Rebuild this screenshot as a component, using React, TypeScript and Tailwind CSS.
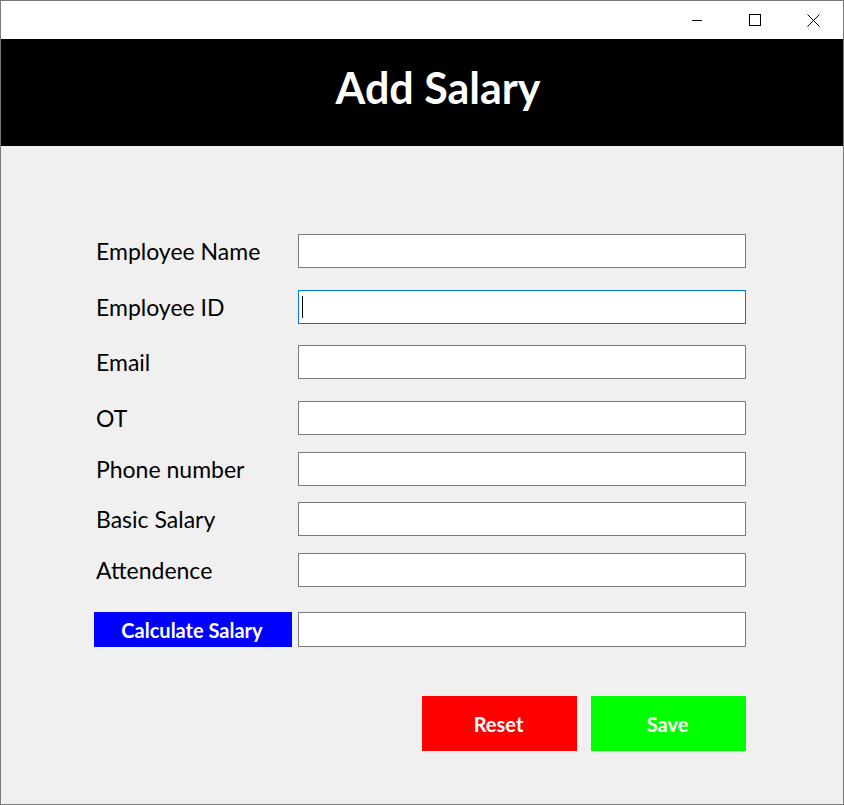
import React from "react"

const rows = [
  { label: "Employee Name", mt: "mt-[88px]" },
  { label: "Employee ID", mt: "mt-[22px]", focused: true },
  { label: "Email", mt: "mt-[21px]" },
  { label: "OT", mt: "mt-[22px]" },
  { label: "Phone number", mt: "mt-[17px]" },
  { label: "Basic Salary", mt: "mt-[16px]" },
  { label: "Attendence", mt: "mt-[17px]" },
]

function TitleBar() {
  return (
    <div className="h-[38px] bg-white flex justify-end items-center">
      <div className="flex items-center">
        <div className="w-[58px] h-[38px] flex items-center justify-center">
          <svg width="12" height="12" viewBox="0 0 12 12">
            <line x1="1" y1="6.5" x2="11" y2="6.5" stroke="#000" strokeWidth="1" />
          </svg>
        </div>
        <div className="w-[58px] h-[38px] flex items-center justify-center">
          <svg width="12" height="12" viewBox="0 0 12 12">
            <rect x="0.5" y="0.5" width="11" height="11" fill="none" stroke="#000" strokeWidth="1" />
          </svg>
        </div>
        <div className="w-[58px] h-[38px] flex items-center justify-center mr-[1px]">
          <svg width="13" height="13" viewBox="0 0 13 13">
            <path d="M0.5 0.5 L12.5 12.5 M12.5 0.5 L0.5 12.5" stroke="#000" strokeWidth="1" />
          </svg>
        </div>
      </div>
    </div>
  )
}

export default function App() {
  return (
    <div className="w-[844px] h-[805px] border border-[#7a7a7a] bg-[#f0f0f0] flex flex-col" style={{ fontFamily: "Lato, 'Open Sans', sans-serif" }}>
      <TitleBar />

      {/* Header */}
      <div className="h-[107px] bg-black flex items-center justify-center">
        <h1 className="text-white text-[43px] font-bold leading-none pl-[32px] pb-[10px]">Add Salary</h1>
      </div>

      {/* Form */}
      <div className="flex flex-col pl-[93px]">
        {rows.map((r) => (
          <div key={r.label} className={`flex items-center h-[34px] ${r.mt}`}>
            <label className="w-[204px] pl-[2px] text-[23px] text-black leading-none">{r.label}</label>
            <div
              className={`w-[448px] h-[34px] bg-white border ${
                r.focused ? "border-[#0078d7]" : "border-[#7a7a7a]"
              } flex items-center`}
            >
              {r.focused && <div className="ml-[3px] w-px h-[22px] bg-black" />}
            </div>
          </div>
        ))}

        <div className="flex items-center mt-[25px] h-[35px]">
          <button className="w-[198px] h-[35px] bg-[#0000ff] text-white text-[20px] font-bold leading-none pr-[2px]">
            Calculate Salary
          </button>
          <div className="ml-[6px] w-[448px] h-[35px] bg-white border border-[#7a7a7a]" />
        </div>

        <div className="flex mt-[49px] pl-[328px] gap-[14px]">
          <button className="w-[155px] h-[55px] bg-[#ff0000] text-white text-[20px] font-bold leading-none pr-[2px]">
            Reset
          </button>
          <button className="w-[155px] h-[55px] bg-[#00ff00] text-white text-[20px] font-bold leading-none pr-[2px]">
            Save
          </button>
        </div>
      </div>
    </div>
  )
}
